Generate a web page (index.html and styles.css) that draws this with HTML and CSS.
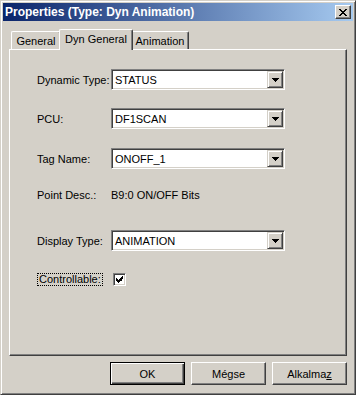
FILE: index.html
```html
<!DOCTYPE html>
<html lang="en">
<head>
    <meta charset="UTF-8">
    <meta name="viewport" content="width=device-width, initial-scale=1.0">
    <title>Properties</title>
    <link rel="stylesheet" href="styles.css">
</head>
<body>
    <div class="window">
        <div class="titlebar">
            <span class="title">Properties (Type: Dyn Animation)</span>
            <span class="close-btn">
                <svg width="8" height="7" viewBox="0 0 8 7" shape-rendering="crispEdges">
                    <path d="M0 0h2v1h-2zM6 0h2v1h-2zM1 1h2v1h-2zM5 1h2v1h-2zM2 2h4v1h-4zM3 3h2v1h-2zM2 4h4v1h-4zM1 5h2v1h-2zM5 5h2v1h-2zM0 6h2v1h-2zM6 6h2v1h-2z" fill="#000"/>
                </svg>
            </span>
        </div>
        <div class="client">
            <div class="tab-strip">
                <div class="tab tab-general">General</div>
                <div class="tab tab-dyn active">Dyn General</div>
                <div class="tab tab-anim">Animation</div>
            </div>
            <div class="tab-panel">
                <div class="row row-1">
                    <span class="label">Dynamic Type:</span>
                    <div class="combo">
                        <span class="combo-text">STATUS</span>
                        <span class="combo-btn"><svg width="7" height="4" viewBox="0 0 7 4" shape-rendering="crispEdges"><path d="M0 0h7v1h-7zM1 1h5v1h-5zM2 2h3v1h-3zM3 3h1v1h-1z" fill="#000"/></svg></span>
                    </div>
                </div>
                <div class="row row-2">
                    <span class="label">PCU:</span>
                    <div class="combo">
                        <span class="combo-text">DF1SCAN</span>
                        <span class="combo-btn"><svg width="7" height="4" viewBox="0 0 7 4" shape-rendering="crispEdges"><path d="M0 0h7v1h-7zM1 1h5v1h-5zM2 2h3v1h-3zM3 3h1v1h-1z" fill="#000"/></svg></span>
                    </div>
                </div>
                <div class="row row-3">
                    <span class="label">Tag Name:</span>
                    <div class="combo">
                        <span class="combo-text">ONOFF_1</span>
                        <span class="combo-btn"><svg width="7" height="4" viewBox="0 0 7 4" shape-rendering="crispEdges"><path d="M0 0h7v1h-7zM1 1h5v1h-5zM2 2h3v1h-3zM3 3h1v1h-1z" fill="#000"/></svg></span>
                    </div>
                </div>
                <div class="row row-4">
                    <span class="label">Point Desc.:</span>
                    <span class="value">B9:0 ON/OFF Bits</span>
                </div>
                <div class="row row-5">
                    <span class="label">Display Type:</span>
                    <div class="combo">
                        <span class="combo-text">ANIMATION</span>
                        <span class="combo-btn"><svg width="7" height="4" viewBox="0 0 7 4" shape-rendering="crispEdges"><path d="M0 0h7v1h-7zM1 1h5v1h-5zM2 2h3v1h-3zM3 3h1v1h-1z" fill="#000"/></svg></span>
                    </div>
                </div>
                <div class="row row-6">
                    <span class="label"><span class="focus">Controllable:</span></span>
                    <span class="checkbox">
                        <svg width="7" height="7" viewBox="0 0 7 7" shape-rendering="crispEdges"><path d="M6 0h1v3h-1zM5 1h1v4h-1zM4 2h1v3h-1zM0 2h1v3h-1zM1 3h1v3h-1zM3 3h1v3h-1zM2 4h1v3h-1z" fill="#000"/></svg>
                    </span>
                </div>
            </div>
            <div class="buttons">
                <button class="btn default">OK</button>
                <button class="btn">Mégse</button>
                <button class="btn">Alkalma<u>z</u></button>
            </div>
        </div>
    </div>
</body>
</html>
```

FILE: styles.css
```css
html, body{
    margin: 0;
    padding: 0;
}
body{
    font-family: "Liberation Sans", Arial, sans-serif;
    font-size: 11px;
    color: #000;
    background: #d4d0c8;
}
.window{
    width: 356px;
    height: 395px;
    box-sizing: border-box;
    display: flex;
    flex-direction: column;
    padding: 2px;
    background: #d4d0c8;
    border: 1px solid;
    border-color: #d4d0c8 #404040 #404040 #d4d0c8;
    box-shadow: inset 1px 1px #fff, inset -1px -1px #808080;
}
.titlebar{
    height: 18px;
    display: flex;
    align-items: center;
    justify-content: space-between;
    padding: 0 2px;
    background: linear-gradient(to right, #0a246a, #a6caf0);
}
.title{
    color: #fff;
    font-size: 12px;
    font-weight: bold;
    white-space: nowrap;
}
.close-btn{
    width: 16px;
    height: 14px;
    box-sizing: border-box;
    display: flex;
    align-items: center;
    justify-content: center;
    background: #d4d0c8;
    border: 1px solid;
    border-color: #fff #404040 #404040 #fff;
    box-shadow: inset -1px -1px #808080;
}
.client{
    flex: 1;
    display: flex;
    flex-direction: column;
    padding: 8px 6px 7px 6px;
}
.tab-strip{
    height: 20px;
    display: flex;
    align-items: flex-end;
    padding-left: 2px;
}
.tab{
    height: 18px;
    box-sizing: border-box;
    display: flex;
    align-items: center;
    justify-content: center;
    background: #d4d0c8;
    border-top: 1px solid #fff;
    border-left: 1px solid #fff;
    border-right: 1px solid #404040;
    border-top-left-radius: 2px;
    border-top-right-radius: 2px;
    box-shadow: inset -1px 0 #808080;
}
.tab-general{
    width: 50px;
}
.tab-dyn{
    width: 70px;
}
.tab-anim{
    width: 58px;
}
.tab.active{
    position: relative;
    z-index: 1;
    width: 74px;
    height: 21px;
    margin: 0 -2px -1px -2px;
    padding-bottom: 2px;
}
.tab-panel{
    flex: 1;
    display: flex;
    flex-direction: column;
    padding-left: 27px;
    background: #d4d0c8;
    border: 1px solid;
    border-color: #fff #404040 #404040 #fff;
    box-shadow: inset -1px -1px #808080;
}
.row{
    height: 21px;
    display: flex;
    align-items: center;
}
.row-1{ margin-top: 19px; }
.row-2{ margin-top: 18px; }
.row-3{ margin-top: 19px; }
.row-4{ margin-top: 15px; }
.row-5{ margin-top: 25px; }
.row-6{ margin-top: 18px; }
.label{
    width: 74px;
    flex-shrink: 0;
    white-space: nowrap;
}
.focus{
    display: inline-block;
    height: 13px;
    line-height: 11px;
    box-sizing: border-box;
    padding: 0 1px;
    border: 1px dotted #000;
}
.combo{
    width: 174px;
    height: 21px;
    box-sizing: border-box;
    display: flex;
    align-items: center;
    background: #fff;
    border: 1px solid;
    border-color: #808080 #fff #fff #808080;
    box-shadow: inset 1px 1px #404040, inset -1px -1px #d4d0c8;
    padding: 1px;
}
.combo-text{
    flex: 1;
    padding-left: 2px;
}
.combo-btn{
    width: 16px;
    height: 17px;
    box-sizing: border-box;
    display: flex;
    align-items: center;
    justify-content: center;
    background: #d4d0c8;
    border: 1px solid;
    border-color: #d4d0c8 #404040 #404040 #d4d0c8;
    box-shadow: inset 1px 1px #fff, inset -1px -1px #808080;
}
.checkbox{
    width: 13px;
    height: 13px;
    margin-left: 2px;
    box-sizing: border-box;
    display: flex;
    align-items: center;
    justify-content: center;
    background: #fff;
    border: 1px solid;
    border-color: #808080 #fff #fff #808080;
    box-shadow: inset 1px 1px #404040, inset -1px -1px #d4d0c8;
}
.buttons{
    display: flex;
    justify-content: flex-end;
    gap: 6px;
    margin-top: 6px;
}
.btn{
    width: 75px;
    height: 23px;
    padding: 0;
    box-sizing: border-box;
    font-family: inherit;
    font-size: 11px;
    color: #000;
    background: #d4d0c8;
    border: 1px solid;
    border-color: #fff #404040 #404040 #fff;
    box-shadow: inset -1px -1px #808080;
}
.btn.default{
    border-color: #000;
    box-shadow: inset 1px 1px #fff, inset -1px -1px #404040, inset -2px -2px #808080;
}
.btn u{
    text-decoration: underline;
}
```
